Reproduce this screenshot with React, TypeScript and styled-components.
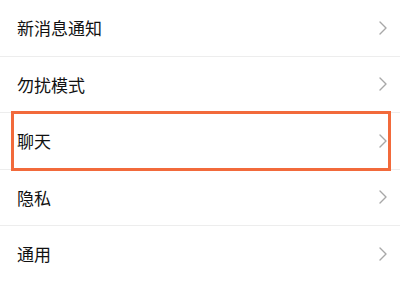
import React from "react";
import styled, { createGlobalStyle } from "styled-components";

const items = ["新消息通知", "勿扰模式", "聊天", "隐私", "通用"];
const HIGHLIGHT = "聊天";

const GlobalStyle = createGlobalStyle`
  html, body {
    margin: 0;
    padding: 0;
    background: #ffffff;
  }
  body {
    font-family: "Noto Sans CJK SC", "Noto Sans", sans-serif;
    overflow: hidden;
  }
`;

const List = styled.ul`
  margin: 0;
  padding: 0;
  list-style: none;
  width: 400px;
  background: #ffffff;
`;

const Row = styled.li`
  position: relative;
  box-sizing: border-box;
  display: flex;
  align-items: center;
  justify-content: space-between;
  height: 56.5px;
  padding: 0 13px 0 17px;
  border-bottom: 1px solid #ededed;
`;

const Label = styled.span`
  font-size: 17px;
  color: #111111;
  line-height: 1;
`;

const Chevron = styled.svg`
  width: 8px;
  height: 14px;
  flex: none;
`;

const Highlight = styled.div`
  position: absolute;
  top: -2px;
  bottom: -2px;
  left: 11px;
  right: 9px;
  border: 3px solid #f26a3b;
  pointer-events: none;
`;

const Arrow = () => (
  <Chevron viewBox="0 0 8 14" fill="none">
    <path
      d="M1 1 L7 7 L1 13"
      stroke="#a8a8a8"
      strokeWidth="1.4"
      strokeLinecap="round"
      strokeLinejoin="round"
    />
  </Chevron>
);

export default function App() {
  return (
    <>
      <GlobalStyle />
      <List>
        {items.map((item) => (
          <Row key={item}>
            <Label>{item}</Label>
            <Arrow />
            {item === HIGHLIGHT && <Highlight />}
          </Row>
        ))}
      </List>
    </>
  );
}
